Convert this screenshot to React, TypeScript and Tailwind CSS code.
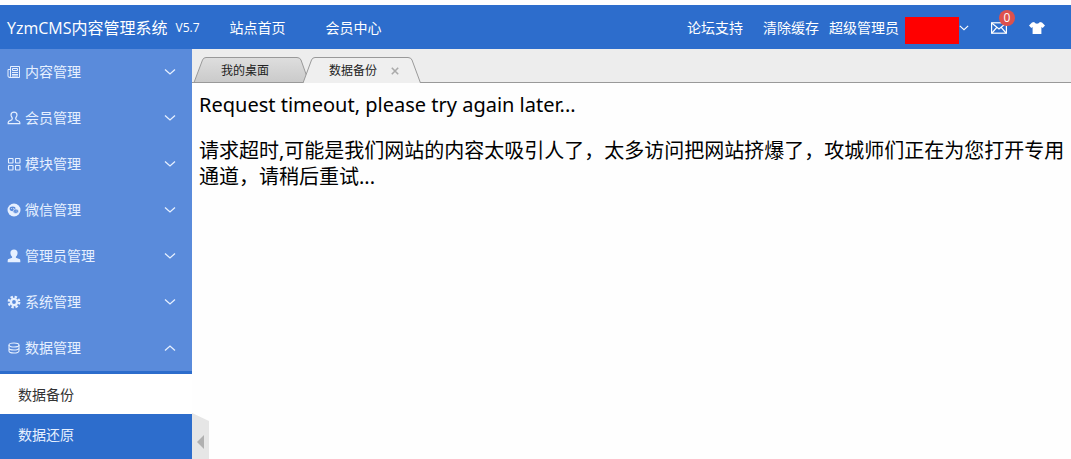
import { useState } from "react"
import type { ReactNode } from "react"
import clsx from "clsx"

interface IconProps {
  className?: string
}

const NewsIcon = () => (
  <svg viewBox="0 0 14 14" className="size-3.5" fill="none" stroke="currentColor">
    <path d="M3.5 1.5h9v11h-10a1.5 1.5 0 0 1-1.5-1.5V4.5h2.5M3.5 1.5v9.5a1.5 1.5 0 0 1-1.5 1.5" />
    <path d="M5.5 3.5h5v2h-5zM5 7.5h6M5 9.5h6M5 11h6" />
  </svg>
)

const UserIcon = () => (
  <svg viewBox="0 0 14 14" className="size-3.5" fill="none" stroke="currentColor" strokeWidth="1.2">
    <path d="M7 1.2c-2 0-3 1.2-3 2.700 0 1.500 1.300 2.400 1.300 3.700 0 1.200-.8 1.700-2.200 2.100-1.300.4-1.900.8-1.900 1.700v1.200h11.600v-1.200c0-.9-.6-1.300-1.900-1.700-1.400-.4-2.200-.9-2.200-2.100C8.700 6.300 10 5.400 10 3.900c0-1.500-1-2.700-3-2.700z" />
  </svg>
)

const ModuleIcon = () => (
  <svg viewBox="0 0 14 14" className="size-3.5" fill="none" stroke="currentColor" strokeWidth="1.1">
    <rect x="1.500" y="1.500" width="4.500" height="4.500" rx="0.500" />
    <rect x="8.500" y="1.500" width="4.500" height="4.500" rx="0.500" />
    <rect x="1.500" y="8.500" width="4.500" height="4.500" rx="0.500" />
    <rect x="8.500" y="8.500" width="4.500" height="4.500" rx="0.500" />
  </svg>
)

const WechatIcon = () => (
  <svg viewBox="0 0 14 14" className="size-3.5">
    <circle cx="7" cy="7" r="6.500" fill="currentColor" />
    <ellipse cx="5.600" cy="5.800" rx="3" ry="2.400" fill="#5a8bdb" />
    <ellipse cx="8.800" cy="8.200" rx="2.700" ry="2.200" fill="#5a8bdb" stroke="currentColor" strokeWidth="0.700" />
    <circle cx="4.700" cy="5.400" r="0.500" fill="currentColor" />
    <circle cx="6.700" cy="5.400" r="0.500" fill="currentColor" />
    <circle cx="8" cy="8" r="0.400" fill="currentColor" />
    <circle cx="9.700" cy="8" r="0.400" fill="currentColor" />
  </svg>
)

const AdminIcon = () => (
  <svg viewBox="0 0 14 14" className="size-3.5" fill="currentColor">
    <path d="M7 .6c-2.300 0-3.600 1.500-3.600 3.500 0 1.600.7 2.900 1.700 3.700v1L1 10.300C.7 11 .6 12 .7 13.200h12.600c.1-1.200 0-2.200-.3-2.900L8.900 8.800v-1c1-.8 1.700-2.100 1.700-3.700C10.600 2.100 9.300.6 7 .6z" />
  </svg>
)

const GearIcon = () => (
  <svg viewBox="0 0 14 14" className="size-3.5" fill="none" stroke="currentColor">
    <circle cx="7" cy="7" r="3.100" strokeWidth="2.400" />
    <circle cx="7" cy="7" r="5.300" strokeWidth="2.200" strokeDasharray="2.400 1.762" />
  </svg>
)

const DatabaseIcon = () => (
  <svg viewBox="0 0 14 14" className="size-3.5" fill="none" stroke="currentColor" strokeWidth="1.100">
    <ellipse cx="7" cy="4" rx="5" ry="2" />
    <path d="M2 4v6c0 1.100 2.200 2 5 2s5-.9 5-2V4M2 7c0 1.100 2.200 2 5 2s5-.9 5-2" />
  </svg>
)

const ChevronIcon = ({ className }: IconProps) => (
  <svg viewBox="0 0 12 8" className={className} fill="none" stroke="currentColor" strokeWidth="1.300">
    <path d="M1 1.500l5 4.500 5-4.500" />
  </svg>
)

const MailIcon = () => (
  <svg viewBox="0 0 16 12" className="h-3 w-4" fill="none" stroke="currentColor" strokeWidth="1.200">
    <rect x=".6" y=".8" width="14.800" height="10.400" />
    <path d="M1 1.200l7 5.800 7-5.800M1 11l4.800-5.600M15 11l-4.800-5.600" />
  </svg>
)

const ShirtIcon = () => (
  <svg viewBox="0 0 16 12" className="h-3 w-4" fill="currentColor">
    <path d="M5.200 0C5.800 1.200 6.800 1.700 8 1.700S10.200 1.200 10.800 0L13 .5 16 3.600 13.700 6l-1.300-.9V12H3.600V5.100L2.300 6 0 3.600 3 .5z" />
  </svg>
)

interface MenuGroup {
  label: string
  icon: ReactNode
  children?: string[]
}

const menu: MenuGroup[] = [
  { label: "内容管理", icon: <NewsIcon /> },
  { label: "会员管理", icon: <UserIcon /> },
  { label: "模块管理", icon: <ModuleIcon /> },
  { label: "微信管理", icon: <WechatIcon /> },
  { label: "管理员管理", icon: <AdminIcon /> },
  { label: "系统管理", icon: <GearIcon /> },
  { label: "数据管理", icon: <DatabaseIcon />, children: ["数据备份", "数据还原"] },
]

const Header = () => (
  <header className="flex h-11 items-center bg-[#2d6dcc] pt-0.5 pr-[26px] pl-[7px] text-sm text-white">
    <a href="#" className="text-base whitespace-nowrap">
      YzmCMS内容管理系统
    </a>
    <span className="ml-2 text-xs">V5.7</span>
    <nav className="ml-[30px] flex gap-10 whitespace-nowrap">
      <a href="#">站点首页</a>
      <a href="#">会员中心</a>
    </nav>
    <div className="ml-auto flex items-center whitespace-nowrap">
      <a href="#">论坛支持</a>
      <a href="#" className="ml-5">
        清除缓存
      </a>
      <button type="button" className="ml-2.5 flex items-center">
        超级管理员
        <span className="ml-1.5 h-[27px] w-[54px] translate-y-0.5 bg-[#ff0000]" />
        <ChevronIcon className="h-2 w-2.5" />
      </button>
      <button type="button" aria-label="消息" className="relative ml-[22px]">
        <MailIcon />
        <span className="absolute -top-3 left-2 flex size-4 items-center justify-center rounded-full bg-[#dd514c] text-xs leading-4">
          0
        </span>
      </button>
      <button type="button" aria-label="换肤" className="ml-[22px]">
        <ShirtIcon />
      </button>
    </div>
  </header>
)

const Sidebar = () => {
  const [open, setOpen] = useState("数据管理")

  return (
    <aside className="relative w-48 shrink-0 bg-[#2d6dcc] text-sm">
      {menu.map((group) => {
        const isOpen = open === group.label
        return (
          <div key={group.label}>
            <button
              type="button"
              aria-expanded={isOpen}
              onClick={() => setOpen(isOpen ? "" : group.label)}
              className="flex h-[46px] w-full items-center bg-[#5a8bdb] pr-4 pl-[7px] text-[#e6f0ff]"
            >
              {group.icon}
              <span className="ml-1">{group.label}</span>
              <ChevronIcon className={clsx("ml-auto h-2 w-3", isOpen && "rotate-180")} />
            </button>
            {isOpen && group.children && (
              <ul className="border-t-3 border-[#2d6dcc]">
                {group.children.map((item, i) => (
                  <li key={item}>
                    <a
                      href="#"
                      className={clsx(
                        "flex h-10 items-center pt-0.5 pl-[18px]",
                        i === 0 ? "bg-white text-[#333]" : "text-[#e6f0ff]",
                      )}
                    >
                      {item}
                    </a>
                  </li>
                ))}
              </ul>
            )}
          </div>
        )
      })}

      {/* Collapse handle */}
      <button type="button" aria-label="收起菜单" className="absolute bottom-0 left-full">
        <svg viewBox="0 0 17 46" className="h-[46px] w-[17px]">
          <path d="M0 0l17 8v38H0z" fill="#e6e6e6" />
          <path d="M12 22v14l-7-7z" fill="#b0b0b0" />
        </svg>
      </button>
    </aside>
  )
}

const Tabs = () => (
  <div className="flex h-[34px] items-end border-b border-[#999] bg-[#ededed] pl-px text-xs text-[#222]">
    <button type="button" className="relative -mb-px h-[26px] w-[117px] pt-0.5 pl-7 text-left">
      <svg viewBox="0 0 117 26" className="absolute inset-0 h-full w-full">
        <defs>
          <linearGradient id="tab" x1="0" y1="0" x2="0" y2="1">
            <stop offset="0" stopColor="#dedede" />
            <stop offset="1" stopColor="#cacaca" />
          </linearGradient>
        </defs>
        <path d="M1 25.500L9.500 3Q10.500.5 13 .5h91q3 0 4 2.500l8 22.500z" fill="url(#tab)" stroke="#999" />
      </svg>
      <span className="relative">我的桌面</span>
    </button>
    <div className="relative -mb-px -ml-2 flex h-[26px] w-[119px] items-center pt-0.5">
      <svg viewBox="0 0 119 26" className="absolute inset-0 h-full w-full">
        <path d="M1 26L9.500 3Q10.500.5 13 .5h93q3 0 4 2.500l8.500 23" fill="#efefef" stroke="#999" />
      </svg>
      <button type="button" className="relative ml-[27px]">
        数据备份
      </button>
      <button type="button" aria-label="关闭" className="relative ml-3.5 text-[#aaa]">
        <svg viewBox="0 0 8 8" className="size-2" fill="none" stroke="currentColor" strokeWidth="1.600">
          <path d="M.8.8l6.400 6.400M7.200.8L.8 7.200" />
        </svg>
      </button>
    </div>
  </div>
)

export default function App() {
  return (
    <div className="flex min-h-screen flex-col bg-[#fefefe] pt-[5px] font-['Open_Sans','Noto_Sans_CJK_SC',sans-serif]">
      <Header />
      <div className="flex grow">
        <Sidebar />
        <main className="min-w-0 grow">
          <Tabs />
          <div className="pt-[9px] pr-1 pl-[7px] font-['Noto_Sans','Noto_Sans_CJK_SC',sans-serif] text-xl/[26px] text-black">
            <p>Request timeout, please try again later...</p>
            <p className="mt-5">
              请求超时,可能是我们网站的内容太吸引人了，太多访问把网站挤爆了，攻城师们正在为您打开专用通道，请稍后重试...
            </p>
          </div>
        </main>
      </div>
    </div>
  )
}
